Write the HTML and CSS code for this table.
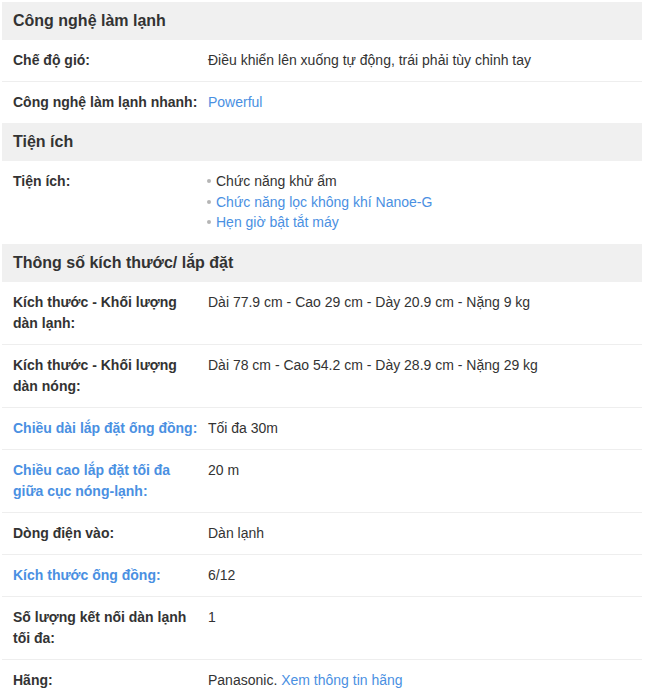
FILE: index.html
```html
<!DOCTYPE html>
<html lang="vi">
<head>
<meta charset="utf-8">
<title>Thông số kỹ thuật</title>
<link rel="stylesheet" href="styles.css">
</head>
<body>
<div class="specs">
  <section class="group">
    <h3 class="group-title">Công nghệ làm lạnh</h3>
    <div class="row">
      <div class="label">Chế độ gió:</div>
      <div class="value">Điều khiển lên xuống tự động, trái phải tùy chỉnh tay</div>
    </div>
    <div class="row">
      <div class="label">Công nghệ làm lạnh nhanh:</div>
      <div class="value"><a class="link">Powerful</a></div>
    </div>
  </section>
  <section class="group">
    <h3 class="group-title">Tiện ích</h3>
    <div class="row">
      <div class="label">Tiện ích:</div>
      <div class="value">
        <ul class="bullets">
          <li>Chức năng khử ẩm</li>
          <li><a class="link">Chức năng lọc không khí Nanoe-G</a></li>
          <li><a class="link">Hẹn giờ bật tắt máy</a></li>
        </ul>
      </div>
    </div>
  </section>
  <section class="group">
    <h3 class="group-title">Thông số kích thước/ lắp đặt</h3>
    <div class="row">
      <div class="label">Kích thước - Khối lượng dàn lạnh:</div>
      <div class="value">Dài 77.9 cm - Cao 29 cm - Dày 20.9 cm - Nặng 9 kg</div>
    </div>
    <div class="row">
      <div class="label">Kích thước - Khối lượng dàn nóng:</div>
      <div class="value">Dài 78 cm - Cao 54.2 cm - Dày 28.9 cm - Nặng 29 kg</div>
    </div>
    <div class="row">
      <div class="label"><a class="link">Chiều dài lắp đặt ống đồng:</a></div>
      <div class="value">Tối đa 30m</div>
    </div>
    <div class="row">
      <div class="label"><a class="link">Chiều cao lắp đặt tối đa giữa cục nóng-lạnh:</a></div>
      <div class="value">20 m</div>
    </div>
    <div class="row">
      <div class="label">Dòng điện vào:</div>
      <div class="value">Dàn lạnh</div>
    </div>
    <div class="row">
      <div class="label"><a class="link">Kích thước ống đồng:</a></div>
      <div class="value">6/12</div>
    </div>
    <div class="row">
      <div class="label">Số lượng kết nối dàn lạnh tối đa:</div>
      <div class="value">1</div>
    </div>
    <div class="row">
      <div class="label">Hãng:</div>
      <div class="value">Panasonic. <a class="link">Xem thông tin hãng</a></div>
    </div>
  </section>
</div>
</body>
</html>
```
FILE: styles.css
```css
html, body {
  margin: 0;
  padding: 0;
  background: #fff;
}
body {
  font-family: "Liberation Sans", Arial, sans-serif;
  font-size: 14px;
  color: #333;
}
.specs {
  width: 640px;
  padding: 2px;
}
.group-title {
  margin: 0;
  height: 38px;
  line-height: 38px;
  padding: 0 11px;
  background: #f0f0f0;
  font-size: 16px;
  font-weight: bold;
  color: #333;
}
.row {
  display: grid;
  grid-template-columns: 206px 1fr;
  border-bottom: 1px solid #eeeeee;
}
.group .row:last-child {
  border-bottom: none;
}
.label {
  padding: 10px 7px 10px 11px;
  line-height: 21px;
  font-weight: bold;
}
.value {
  padding: 10px 10px 10px 0;
  line-height: 21px;
}
.link {
  color: #4a90e2;
  text-decoration: none;
}
.bullets {
  list-style: none;
  margin: 0 0 0 -1px;
  padding: 0 0 1px;
}
.bullets li {
  line-height: 20.5px;
}
.bullets li::before {
  content: "";
  display: inline-block;
  width: 4px;
  height: 4px;
  border-radius: 50%;
  background: #b5b5b5;
  vertical-align: middle;
  margin: 0 5px 2px 0;
}
```
